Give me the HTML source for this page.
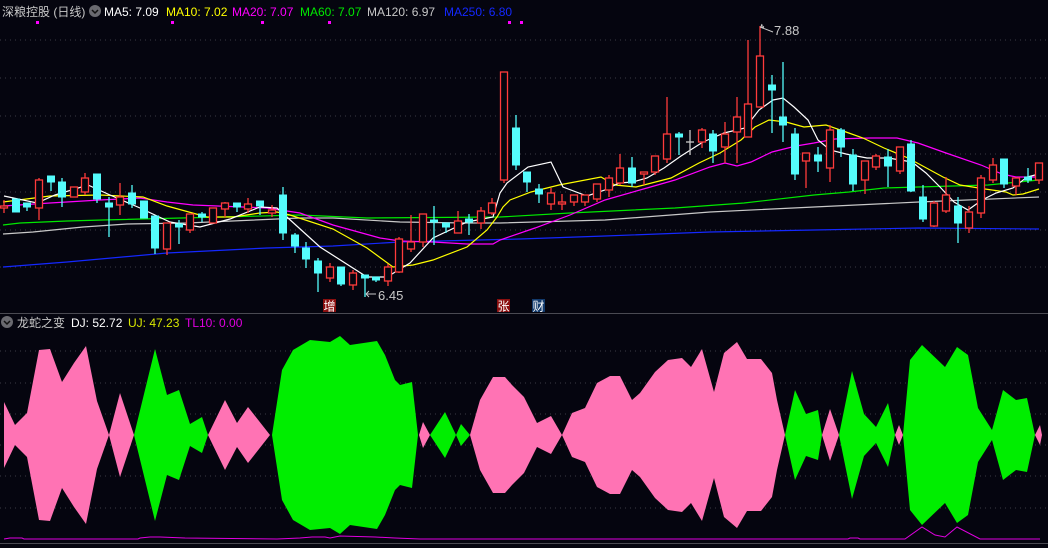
<!DOCTYPE html>
<html><head><meta charset="utf-8"><style>
html,body{margin:0;padding:0;background:#05050f;}
body{width:1048px;height:548px;overflow:hidden;position:relative;font-family:"Liberation Sans","Noto Sans CJK SC",sans-serif;}
svg{position:absolute;left:0;top:0;}
.t{font-size:12px;}
.r{fill:#05050f;stroke:#ff3b3b;stroke-width:1.3}
.rw{stroke:#ff3b3b;stroke-width:1.3}
.c{fill:#54fcfc;stroke:#54fcfc;stroke-width:1}
.cw{stroke:#54fcfc;stroke-width:1.3}
.g{stroke:#3a3a44;stroke-width:1;stroke-dasharray:1 4}
.ma{fill:none;stroke-width:1.2}
</style></head><body>
<svg width="1048" height="548" viewBox="0 0 1048 548">
<g class="g">
<line x1="0" y1="40" x2="1048" y2="40"/><line x1="0" y1="78" x2="1048" y2="78"/><line x1="0" y1="116" x2="1048" y2="116"/><line x1="0" y1="154" x2="1048" y2="154"/><line x1="0" y1="192" x2="1048" y2="192"/><line x1="0" y1="230" x2="1048" y2="230"/><line x1="0" y1="267" x2="1048" y2="267"/>
<line x1="0" y1="351" x2="1048" y2="351"/><line x1="0" y1="383" x2="1048" y2="383"/><line x1="0" y1="414" x2="1048" y2="414"/><line x1="0" y1="445" x2="1048" y2="445"/><line x1="0" y1="476" x2="1048" y2="476"/><line x1="0" y1="508" x2="1048" y2="508"/>
</g>
<line x1="0" y1="313.5" x2="1048" y2="313.5" stroke="#4a4a52"/>
<line x1="0" y1="543.5" x2="1048" y2="543.5" stroke="#4a4a52"/>
<g fill="#ff00ff"><rect x="36" y="21" width="3" height="3"/><rect x="171" y="21" width="3" height="3"/><rect x="261" y="21" width="3" height="3"/><rect x="328" y="21" width="3" height="3"/><rect x="508" y="21" width="3" height="3"/><rect x="520" y="21" width="3" height="3"/></g>

<polyline class="ma" stroke="#1428ff" points="3,267 67,262 167,253 267,248 333,246 400,242 520,239 605,236 710,232 814,230 919,228 1039,229"/>
<polyline class="ma" stroke="#c8c8c8" points="3,234 33,232 83,227 127,224 187,223 300,218 333,218 400,222 467,223 500,223 605,220 710,212 814,207 919,202 1039,197"/>
<polyline class="ma" stroke="#00e800" points="3,225 20,223 67,221 103,220 300,215 367,218 500,217 570,213 675,208 744,203 814,195 849,192 884,188 918,187 988,185 1039,180"/>
<polyline class="ma" stroke="#ff00ff" points="3,206 50,203 100,200 140,198 167,202 193,205 267,208 300,213 333,225 380,238 400,241 433,242 467,244 493,244 500,240 535,228 570,215 605,200 647,188 675,180 710,167 725,163 737,166 751,162 772,152 796,146 814,143 835,139 870,138 897,138 918,143 946,153 981,165 1002,174 1016,177 1039,177"/>
<polyline class="ma" stroke="#ffff00" points="3,202 50,196 100,195 143,197 167,206 207,217 233,217 260,213 277,212 290,215 333,229 367,248 393,267 413,265 433,260 467,247 487,230 497,217 503,207 510,200 531,192 559,185 601,177 615,185 636,187 671,178 699,163 720,153 741,140 755,127 769,120 786,122 804,127 826,125 846,132 863,138 884,148 908,158 943,177 960,185 985,189 1006,192 1013,195 1023,194 1039,189"/>
<polyline class="ma" stroke="#ffffff" points="4,196 37,203 55,195 88,185 110,195 140,208 170,222 200,227 230,219 260,207 277,208 320,247 367,277 387,277 410,263 433,238 467,222 493,217 500,193 507,183 528,167 551,162 563,187 587,196 605,190 619,183 633,182 647,178 664,168 681,156 703,142 724,133 745,128 759,110 773,100 783,98 794,107 808,120 818,140 830,150 846,154 867,158 888,158 912,162 926,173 940,187 954,202 968,210 982,200 996,193 1013,188 1027,177 1039,174"/>

<g>
<line class="rw" x1="4" y1="200" x2="4" y2="213"/><rect class="r" x="0.5" y="206" width="7" height="2"/>
<line class="cw" x1="16" y1="199" x2="16" y2="212"/><rect class="c" x="12.5" y="199" width="7" height="13"/>
<line class="cw" x1="27" y1="203" x2="27" y2="211"/><rect class="c" x="23.5" y="203" width="7" height="4"/>
<line class="rw" x1="39" y1="178" x2="39" y2="220"/><rect class="r" x="35.5" y="180" width="7" height="28"/>
<line class="cw" x1="51" y1="176" x2="51" y2="191"/><rect class="c" x="47.5" y="176" width="7" height="6"/>
<line class="cw" x1="62" y1="178" x2="62" y2="207"/><rect class="c" x="58.5" y="182" width="7" height="15"/>
<line class="rw" x1="74" y1="187" x2="74" y2="197"/><rect class="r" x="70.5" y="187" width="7" height="10"/>
<line class="rw" x1="85" y1="173" x2="85" y2="195"/><rect class="r" x="81.5" y="178" width="7" height="14"/>
<line class="cw" x1="97" y1="174" x2="97" y2="203"/><rect class="c" x="93.5" y="174" width="7" height="25"/>
<line class="cw" x1="109" y1="197" x2="109" y2="237"/><rect class="c" x="105.5" y="203" width="7" height="4"/>
<line class="rw" x1="120" y1="183" x2="120" y2="215"/><rect class="r" x="116.5" y="197" width="7" height="8"/>
<line class="cw" x1="132" y1="185" x2="132" y2="208"/><rect class="c" x="128.5" y="193" width="7" height="11"/>
<line class="cw" x1="144" y1="201" x2="144" y2="218"/><rect class="c" x="140.5" y="201" width="7" height="17"/>
<line class="cw" x1="155" y1="216" x2="155" y2="254"/><rect class="c" x="151.5" y="216" width="7" height="32"/>
<line class="rw" x1="167" y1="223" x2="167" y2="255"/><rect class="r" x="163.5" y="223" width="7" height="26"/>
<line class="cw" x1="179" y1="220" x2="179" y2="244"/><rect class="c" x="175.5" y="224" width="7" height="3"/>
<line class="rw" x1="190" y1="214" x2="190" y2="233"/><rect class="r" x="186.5" y="214" width="7" height="16"/>
<line class="cw" x1="202" y1="212" x2="202" y2="222"/><rect class="c" x="198.5" y="214" width="7" height="3"/>
<line class="rw" x1="213" y1="208" x2="213" y2="223"/><rect class="r" x="209.5" y="208" width="7" height="15"/>
<line class="rw" x1="225" y1="202" x2="225" y2="217"/><rect class="r" x="221.5" y="203" width="7" height="6"/>
<line class="cw" x1="237" y1="203" x2="237" y2="212"/><rect class="c" x="233.5" y="203" width="7" height="4"/>
<line class="rw" x1="248" y1="198" x2="248" y2="213"/><rect class="r" x="244.5" y="204" width="7" height="5"/>
<line class="cw" x1="260" y1="201" x2="260" y2="215"/><rect class="c" x="256.5" y="201" width="7" height="5"/>
<line class="rw" x1="272" y1="205" x2="272" y2="217"/><rect class="r" x="268.5" y="210" width="7" height="3"/>
<line class="cw" x1="283" y1="187" x2="283" y2="240"/><rect class="c" x="279.5" y="195" width="7" height="38"/>
<line class="cw" x1="295" y1="233" x2="295" y2="253"/><rect class="c" x="291.5" y="235" width="7" height="11"/>
<line class="cw" x1="306" y1="242" x2="306" y2="268"/><rect class="c" x="302.5" y="248" width="7" height="11"/>
<line class="cw" x1="318" y1="258" x2="318" y2="292"/><rect class="c" x="314.5" y="261" width="7" height="12"/>
<line class="rw" x1="330" y1="263" x2="330" y2="282"/><rect class="r" x="326.5" y="267" width="7" height="11"/>
<line class="cw" x1="341" y1="267" x2="341" y2="286"/><rect class="c" x="337.5" y="267" width="7" height="17"/>
<line class="rw" x1="353" y1="270" x2="353" y2="290"/><rect class="r" x="349.5" y="273" width="7" height="12"/>
<line class="cw" x1="365" y1="275" x2="365" y2="297"/><rect class="c" x="361.5" y="275" width="7" height="3"/>
<line class="cw" x1="376" y1="277" x2="376" y2="282"/><rect class="c" x="372.5" y="277" width="7" height="3"/>
<line class="rw" x1="388" y1="264" x2="388" y2="286"/><rect class="r" x="384.5" y="267" width="7" height="14"/>
<line class="rw" x1="399" y1="237" x2="399" y2="273"/><rect class="r" x="395.5" y="239" width="7" height="33"/>
<line class="rw" x1="411" y1="215" x2="411" y2="252"/><rect class="r" x="407.5" y="242" width="7" height="7"/>
<line class="rw" x1="423" y1="214" x2="423" y2="247"/><rect class="r" x="419.5" y="214" width="7" height="28"/>
<line class="cw" x1="434" y1="206" x2="434" y2="245"/><rect class="c" x="430.5" y="220" width="7" height="2"/>
<line class="cw" x1="446" y1="223" x2="446" y2="233"/><rect class="c" x="442.5" y="223" width="7" height="4"/>
<line class="rw" x1="458" y1="211" x2="458" y2="233"/><rect class="r" x="454.5" y="221" width="7" height="12"/>
<line class="cw" x1="469" y1="214" x2="469" y2="235"/><rect class="c" x="465.5" y="219" width="7" height="3"/>
<line class="rw" x1="481" y1="207" x2="481" y2="229"/><rect class="r" x="477.5" y="211" width="7" height="12"/>
<line class="rw" x1="492" y1="198" x2="492" y2="215"/><rect class="r" x="488.5" y="203" width="7" height="10"/>
<line class="rw" x1="504" y1="72" x2="504" y2="183"/><rect class="r" x="500.5" y="72" width="7" height="108"/>
<line class="cw" x1="516" y1="115" x2="516" y2="170"/><rect class="c" x="512.5" y="128" width="7" height="37"/>
<line class="cw" x1="527" y1="172" x2="527" y2="192"/><rect class="c" x="523.5" y="172" width="7" height="10"/>
<line class="cw" x1="539" y1="184" x2="539" y2="203"/><rect class="c" x="535.5" y="189" width="7" height="5"/>
<line class="rw" x1="551" y1="188" x2="551" y2="210"/><rect class="r" x="547.5" y="193" width="7" height="11"/>
<line class="rw" x1="562" y1="194" x2="562" y2="210"/><rect class="r" x="558.5" y="202" width="7" height="2"/>
<line class="rw" x1="574" y1="195" x2="574" y2="206"/><rect class="r" x="570.5" y="195" width="7" height="7"/>
<line class="rw" x1="585" y1="195" x2="585" y2="206"/><rect class="r" x="581.5" y="195" width="7" height="7"/>
<line class="rw" x1="597" y1="184" x2="597" y2="202"/><rect class="r" x="593.5" y="184" width="7" height="15"/>
<line class="rw" x1="609" y1="175" x2="609" y2="197"/><rect class="r" x="605.5" y="178" width="7" height="12"/>
<line class="rw" x1="620" y1="154" x2="620" y2="185"/><rect class="r" x="616.5" y="168" width="7" height="15"/>
<line class="cw" x1="632" y1="157" x2="632" y2="187"/><rect class="c" x="628.5" y="168" width="7" height="15"/>
<line class="rw" x1="644" y1="172" x2="644" y2="185"/><rect class="r" x="640.5" y="172" width="7" height="2"/>
<line class="rw" x1="655" y1="156" x2="655" y2="175"/><rect class="r" x="651.5" y="156" width="7" height="16"/>
<line class="rw" x1="667" y1="97" x2="667" y2="163"/><rect class="r" x="663.5" y="134" width="7" height="25"/>
<line class="cw" x1="679" y1="132" x2="679" y2="155"/><rect class="c" x="675.5" y="134" width="7" height="3"/>
<line stroke="#c8c8c8" stroke-width="1.3" x1="690" y1="130" x2="690" y2="155"/><line stroke="#c8c8c8" stroke-width="1.3" x1="686" y1="142" x2="694" y2="142"/>
<line class="rw" x1="702" y1="128" x2="702" y2="148"/><rect class="r" x="698.5" y="130" width="7" height="12"/>
<line class="cw" x1="713" y1="130" x2="713" y2="163"/><rect class="c" x="709.5" y="134" width="7" height="17"/>
<line class="rw" x1="725" y1="122" x2="725" y2="163"/><rect class="r" x="721.5" y="134" width="7" height="13"/>
<line class="rw" x1="737" y1="97" x2="737" y2="163"/><rect class="r" x="733.5" y="117" width="7" height="15"/>
<line class="rw" x1="748" y1="40" x2="748" y2="137"/><rect class="r" x="744.5" y="104" width="7" height="33"/>
<line class="rw" x1="760" y1="26" x2="760" y2="107"/><rect class="r" x="756.5" y="56" width="7" height="51"/>
<line class="cw" x1="772" y1="75" x2="772" y2="133"/><rect class="c" x="768.5" y="85" width="7" height="5"/>
<line class="cw" x1="783" y1="62" x2="783" y2="142"/><rect class="c" x="779.5" y="117" width="7" height="8"/>
<line class="cw" x1="795" y1="128" x2="795" y2="180"/><rect class="c" x="791.5" y="134" width="7" height="40"/>
<line class="rw" x1="806" y1="153" x2="806" y2="188"/><rect class="r" x="802.5" y="153" width="7" height="8"/>
<line class="cw" x1="818" y1="147" x2="818" y2="172"/><rect class="c" x="814.5" y="155" width="7" height="6"/>
<line class="rw" x1="830" y1="125" x2="830" y2="182"/><rect class="r" x="826.5" y="130" width="7" height="38"/>
<line class="cw" x1="841" y1="128" x2="841" y2="157"/><rect class="c" x="837.5" y="130" width="7" height="17"/>
<line class="cw" x1="853" y1="149" x2="853" y2="191"/><rect class="c" x="849.5" y="155" width="7" height="29"/>
<line class="rw" x1="865" y1="161" x2="865" y2="194"/><rect class="r" x="861.5" y="161" width="7" height="19"/>
<line class="rw" x1="876" y1="154" x2="876" y2="170"/><rect class="r" x="872.5" y="156" width="7" height="11"/>
<line class="cw" x1="888" y1="149" x2="888" y2="187"/><rect class="c" x="884.5" y="157" width="7" height="9"/>
<line class="rw" x1="900" y1="147" x2="900" y2="174"/><rect class="r" x="896.5" y="147" width="7" height="24"/>
<line class="cw" x1="911" y1="140" x2="911" y2="192"/><rect class="c" x="907.5" y="144" width="7" height="47"/>
<line class="cw" x1="923" y1="185" x2="923" y2="222"/><rect class="c" x="919.5" y="197" width="7" height="22"/>
<line class="rw" x1="934" y1="201" x2="934" y2="227"/><rect class="r" x="930.5" y="203" width="7" height="23"/>
<line class="rw" x1="946" y1="177" x2="946" y2="213"/><rect class="r" x="942.5" y="195" width="7" height="16"/>
<line class="cw" x1="958" y1="197" x2="958" y2="243"/><rect class="c" x="954.5" y="206" width="7" height="17"/>
<line class="rw" x1="969" y1="206" x2="969" y2="233"/><rect class="r" x="965.5" y="212" width="7" height="16"/>
<line class="rw" x1="981" y1="175" x2="981" y2="218"/><rect class="r" x="977.5" y="178" width="7" height="35"/>
<line class="rw" x1="993" y1="158" x2="993" y2="183"/><rect class="r" x="989.5" y="165" width="7" height="15"/>
<line class="cw" x1="1004" y1="159" x2="1004" y2="188"/><rect class="c" x="1000.5" y="159" width="7" height="25"/>
<line class="rw" x1="1016" y1="178" x2="1016" y2="195"/><rect class="r" x="1012.5" y="178" width="7" height="8"/>
<line class="cw" x1="1028" y1="168" x2="1028" y2="183"/><rect class="c" x="1024.5" y="177" width="7" height="3"/>
<line class="rw" x1="1039" y1="163" x2="1039" y2="184"/><rect class="r" x="1035.5" y="163" width="7" height="17"/>
</g>

<path d="M764,27 L761,25 M760,27 L773,32 M762,24 L761,27 L764,28" stroke="#c8c8c8" fill="none" stroke-width="1"/>
<text x="774" y="35" fill="#c8c8c8" font-size="13">7.88</text>
<path d="M366,294 L376,294 M366,294 L369,291 M366,294 L369,297" stroke="#c8c8c8" fill="none" stroke-width="1"/>
<text x="378" y="300" fill="#c8c8c8" font-size="13">6.45</text>
<rect x="323" y="299" width="13" height="13" fill="#8a0f0f"/><text x="323.5" y="310.5" fill="#fff" font-size="12">增</text>
<rect x="497" y="299" width="13" height="13" fill="#8a0f0f"/><text x="497.5" y="310.5" fill="#fff" font-size="12">张</text>
<rect x="532" y="299" width="13" height="13" fill="#123a6c"/><text x="532.5" y="310.5" fill="#fff" font-size="12">财</text>

<g fill="#ff73b4">
<polygon points="4,402 15,425 27,413 39,350 50,349 62,382 74,363 86,346 97,401 109,435 97,469 86,524 74,507 62,488 50,521 39,520 27,457 15,445 4,468"/>
<polygon points="109,435 120,393 134,435 120,477"/>
<polygon points="208,435 225,400 237,423 248,407 270,435 248,463 237,447 225,470"/>
<polygon points="419,435 423,422 430,435 423,448"/>
<polygon points="470,435 480,400 493,377 505,377 512,385 524,397 537,423 551,416 562,435 551,454 537,447 524,473 512,485 505,493 493,493 480,470"/>
<polygon points="562,435 572,413 585,408 597,383 610,376 620,376 632,400 640,393 655,372 668,360 682,358 691,367 702,349 714,392 724,353 737,342 747,359 761,359 772,373 777,400 785,435 777,470 772,497 761,511 747,511 737,528 724,517 714,478 702,521 691,503 682,512 668,510 655,498 640,477 632,470 620,494 610,494 597,487 585,462 572,457"/>
<polygon points="822,435 830,409 839,435 830,461"/>
<polygon points="895,435 899,425 903,435 899,445"/>
<polygon points="1035,435 1040,425 1042,435 1040,445"/>
</g>
<g fill="#00ee00">
<polygon points="134,435 155,349 167,395 179,390 190,424 202,417 208,435 202,453 190,446 179,480 167,475 155,521"/>
<polygon points="272,435 282,370 293,350 310,340 330,342 340,336 350,345 377,341 385,355 395,380 400,385 412,382 418,435 412,488 400,485 395,490 385,515 377,529 350,525 340,534 330,528 310,530 293,520 282,500"/>
<polygon points="430,435 445,412 456,435 461,424 470,435 461,446 456,435 445,458"/>
<polygon points="785,435 795,390 806,414 818,410 822,435 818,460 806,456 795,480"/>
<polygon points="839,435 852,371 864,414 876,427 888,403 895,435 888,467 876,443 864,456 852,499"/>
<polygon points="903,435 910,360 922,345 945,367 957,347 968,355 978,408 992,430 1003,390 1016,400 1027,398 1035,435 1027,472 1016,470 1003,480 992,440 978,462 968,515 957,523 945,503 922,525 910,510"/>
</g>
<polyline fill="none" stroke="#e000e0" stroke-width="1" points="4,539 10,538 22,538 24,539 138,539 140,538 150,537 160,537 185,538 277,539 300,538 312,537 325,537 330,538 340,536 375,537 395,538 420,539 848,539 850,538 858,538 860,539 905,539 922,527 935,535 945,537 957,527 980,539 1040,539"/>

<circle cx="95" cy="11" r="6" fill="#6a6a70"/><path d="M92,10 L95,13 L98,10" stroke="#111" stroke-width="1.5" fill="none"/>
<text x="2" y="16" fill="#c8c8c8" class="t">深粮控股 (日线)</text>
<text x="104" y="16" fill="#ffffff" class="t">MA5: 7.09</text>
<text x="166" y="16" fill="#ffff00" class="t">MA10: 7.02</text>
<text x="232" y="16" fill="#ff00ff" class="t">MA20: 7.07</text>
<text x="300" y="16" fill="#00e800" class="t">MA60: 7.07</text>
<text x="367" y="16" fill="#c8c8c8" class="t">MA120: 6.97</text>
<text x="444" y="16" fill="#1428ff" class="t">MA250: 6.80</text>

<circle cx="7" cy="322" r="6" fill="#6a6a70"/><path d="M4,321 L7,324 L10,321" stroke="#111" stroke-width="1.5" fill="none"/>
<text x="17" y="327" fill="#c8c8c8" class="t">龙蛇之变</text>
<text x="71" y="327" fill="#ffffff" class="t">DJ: 52.72</text>
<text x="128" y="327" fill="#d8e800" class="t">UJ: 47.23</text>
<text x="185" y="327" fill="#e000e0" class="t">TL10: 0.00</text>
</svg>
</body></html>
